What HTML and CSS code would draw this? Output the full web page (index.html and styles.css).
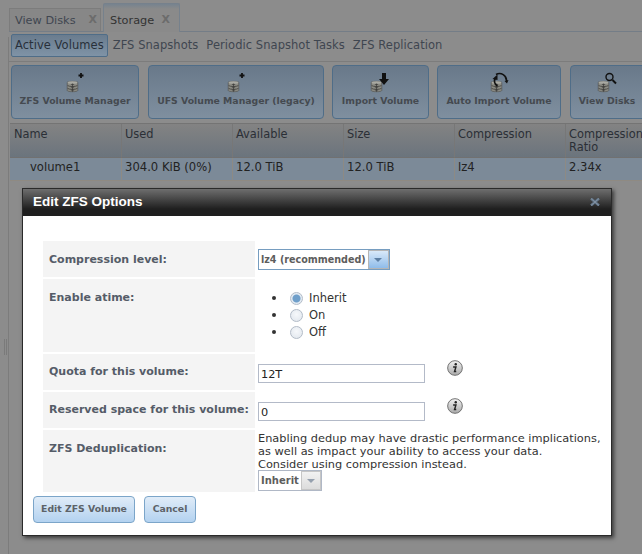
FILE: index.html
```html
<!DOCTYPE html>
<html lang="en">
<head>
<meta charset="utf-8">
<title>Storage</title>
<link rel="stylesheet" href="styles.css">
</head>
<body>
<svg class="defs" width="0" height="0" aria-hidden="true">
  <symbol id="db" viewBox="0 0 16 16">
    <path d="M1.500 3.500C1.500 2 14.500 2 14.500 3.500V13.500C14.500 15.500 1.500 15.500 1.500 13.500Z" fill="#8c8c84" stroke="#4a4a48" stroke-width=".7"/>
    <ellipse cx="8" cy="3.800" rx="6" ry="1.800" fill="#a9a9a2"/>
    <path d="M2 7.500C4 9 12 9 14 7.500M2 11C4 12.500 12 12.500 14 11" fill="none" stroke="#3c3c3a" stroke-width="1"/>
    <path d="M8 5V15M6 6H10M6 9.500H10M6 13H10" stroke="#3a3a38" stroke-width=".9"/>
  </symbol>
</svg>
<div class="page">
  <div class="rail"><span class="grip"></span></div>
  <main class="content">
    <nav class="tabs">
      <div class="tab">View Disks<span class="tab-x">X</span></div>
      <div class="tab tab-on">Storage<span class="tab-x">X</span></div>
    </nav>
    <nav class="subtabs">
      <span class="subtab subtab-on">Active Volumes</span>
      <span class="subtab">ZFS Snapshots</span>
      <span class="subtab">Periodic Snapshot Tasks</span>
      <span class="subtab">ZFS Replication</span>
    </nav>
    <div class="tools">
      <div class="tool tool-a">
        <svg class="tool-icon" viewBox="0 0 24 22"><use href="#db" x="3" y="7" width="13" height="14"/><path d="M18 1V6M15.500 3.500H20.500" stroke="#111" stroke-width="1.800"/></svg>
        <span>ZFS Volume Manager</span>
      </div>
      <div class="tool tool-b">
        <svg class="tool-icon" viewBox="0 0 24 22"><use href="#db" x="3" y="7" width="13" height="14"/><path d="M18 1V6M15.500 3.500H20.500" stroke="#111" stroke-width="1.800"/></svg>
        <span>UFS Volume Manager (legacy)</span>
      </div>
      <div class="tool tool-c">
        <svg class="tool-icon" viewBox="0 0 24 22"><use href="#db" x="1" y="7" width="13" height="14"/><path d="M13 1H17V7H20L15 13L10 7H13Z" fill="#111"/></svg>
        <span>Import Volume</span>
      </div>
      <div class="tool tool-d">
        <svg class="tool-icon" viewBox="0 0 24 22"><use href="#db" x="3" y="7" width="13" height="14"/><path d="M9 2.500A7 7 0 0 1 19.500 9" fill="none" stroke="#111" stroke-width="1.600"/><path d="M17.500 9L20 11.500L21.500 8Z" fill="#111"/><path d="M8.500 6C6.500 9 7.500 12 10.500 14" fill="none" stroke="#111" stroke-width="1.600"/><path d="M5.500 7L10.500 2.500V8Z" fill="#111"/></svg>
        <span>Auto Import Volume</span>
      </div>
      <div class="tool tool-e">
        <svg class="tool-icon" viewBox="0 0 24 22"><use href="#db" x="2" y="7" width="13" height="14"/><circle cx="14.500" cy="5" r="3.500" fill="none" stroke="#111" stroke-width="1.400"/><path d="M17.500 8L21 11.500" stroke="#111" stroke-width="2"/></svg>
        <span>View Disks</span>
      </div>
    </div>
    <div class="grid">
      <div class="cell head first">Name</div>
      <div class="cell head">Used</div>
      <div class="cell head">Available</div>
      <div class="cell head">Size</div>
      <div class="cell head">Compression</div>
      <div class="cell head">Compression Ratio</div>
      <div class="cell row indent">volume1</div>
      <div class="cell row">304.0 KiB (0%)</div>
      <div class="cell row">12.0 TiB</div>
      <div class="cell row">12.0 TiB</div>
      <div class="cell row">lz4</div>
      <div class="cell row">2.34x</div>
    </div>
  </main>
</div>

<section class="dialog">
  <header class="dialog-title">
    <h1>Edit ZFS Options</h1>
    <svg class="dialog-x" viewBox="0 0 10 8"><path d="M1 .5L9 7.500M9 .5L1 7.500" stroke="#5f7285" stroke-width="2.600"/><path d="M1 .5L9 7.500M9 .5L1 7.500" stroke="#8d9bab" stroke-width=".8"/></svg>
  </header>
  <div class="dialog-body">
    <div class="form">
      <div class="label label-mid h36">Compression level:</div>
      <div class="value h36">
        <div class="select select-on"><span class="select-text">lz4 (recommended)</span><span class="select-arrow"></span></div>
      </div>

      <div class="label label-top h73">Enable atime:</div>
      <div class="value h73">
        <ul class="radios">
          <li><span class="radio radio-on"></span>Inherit</li>
          <li><span class="radio"></span>On</li>
          <li><span class="radio"></span>Off</li>
        </ul>
      </div>

      <div class="label label-quota h36">Quota for this volume:</div>
      <div class="value h36 field-row">
        <div class="input">12T</div>
        <svg class="info" viewBox="0 0 17 17"><defs><linearGradient id="ig" x1="0" y1="0" x2="0" y2="1"><stop offset="0" stop-color="#f2f2f2"/><stop offset="1" stop-color="#a9a9a9"/></linearGradient></defs><circle cx="8.500" cy="8.500" r="7.800" fill="url(#ig)" stroke="#6a6a6a"/><circle cx="9.300" cy="4.500" r="1.300" fill="#222"/><path d="M6.500 7.500H9.500L8 12.300H9.800" fill="none" stroke="#222" stroke-width="1.500"/></svg>
      </div>

      <div class="label label-quota h36">Reserved space for this volume:</div>
      <div class="value h36 field-row">
        <div class="input">0</div>
        <svg class="info" viewBox="0 0 17 17"><circle cx="8.500" cy="8.500" r="7.800" fill="url(#ig)" stroke="#6a6a6a"/><circle cx="9.300" cy="4.500" r="1.300" fill="#222"/><path d="M6.500 7.500H9.500L8 12.300H9.800" fill="none" stroke="#222" stroke-width="1.500"/></svg>
      </div>

      <div class="label label-top h62">ZFS Deduplication:</div>
      <div class="value h62">
        <p class="warn">Enabling dedup may have drastic performance implications,<br>as well as impact your ability to access your data.<br>Consider using compression instead.</p>
        <div class="select"><span class="select-text">Inherit</span><span class="select-arrow"></span></div>
      </div>
    </div>
    <div class="actions">
      <span class="btn btn-save">Edit ZFS Volume</span>
      <span class="btn btn-cancel">Cancel</span>
    </div>
  </div>
</section>
</body>
</html>
```
FILE: styles.css
```css
* { box-sizing: border-box; }
html, body { margin: 0; height: 100%; }
body {
  position: relative;
  width: 642px;
  height: 554px;
  overflow: hidden;
  background: #8c8c8c;
  font: 11px/13px "DejaVu Sans", sans-serif;
  color: #333;
}
.defs { position: absolute; }
.page { display: flex; height: 100%; }
.rail {
  flex: 0 0 9px;
  margin-top: 37px;
  border-right: 1px solid #7c7c7c;
  position: relative;
}
.grip {
  position: absolute;
  left: 4px;
  top: 302px;
  width: 3px;
  height: 16px;
  border-left: 1px solid #7a7a7a;
  border-right: 1px solid #7a7a7a;
}
.content { flex: 1; min-width: 0; overflow: hidden; }

.tabs {
  display: flex;
  align-items: flex-end;
  gap: 2px;
  height: 32px;
  padding-top: 3px;
  border-bottom: 1px solid #747d87;
}
.tab {
  display: flex;
  justify-content: space-between;
  width: 92px;
  height: 23px;
  padding: 5px 3px 0 5px;
  background: #878787;
  border: 1px solid #7c7c7c;
  border-bottom: 0;
  font-size: 11.300px;
  color: #3f4650;
}
.tab-on {
  width: 77px;
  height: 29px;
  margin-bottom: -1px;
  padding: 10px 9px 0 6px;
  background: linear-gradient(#76838f 0, #8a8a8a 5px);
  border-color: #76818c;
  border-radius: 2px 2px 0 0;
  color: #333;
}
.tab-x { font-weight: bold; color: #6c6c6c; line-height: 12px; font-size: 11px; }

.subtabs {
  display: flex;
  gap: 2px;
  height: 30px;
  padding: 2px 0 0 2px;
  border-bottom: 1px solid #7c7c7c;
  white-space: nowrap;
}
.subtab { height: 23px; padding: 5px 3px 0; font-size: 11.500px; letter-spacing: .05px; color: #3f4650; }
.subtab-on {
  background: linear-gradient(#6a7c8e, #7f93a6);
  border: 1px solid #4f6d88;
  border-radius: 2px;
  padding: 4px 3px 0;
  color: #28303a;
}

.tools { display: flex; padding: 3px 0 0 2px; white-space: nowrap; }
.tool {
  flex: none;
  display: flex;
  flex-direction: column;
  align-items: center;
  height: 54px;
  padding-top: 6px;
  background: linear-gradient(#69798a, #7f8f9f);
  border: 1px solid #4f6d88;
  border-radius: 4px;
  font-weight: bold;
  font-size: 9.300px;
  line-height: 12px;
  color: #454a50;
}
.tool-a { width: 128px; margin-right: 9px; }
.tool-b { width: 176px; margin-right: 8px; }
.tool-c { width: 97px; margin-right: 8px; }
.tool-d { width: 124px; margin-right: 9px; }
.tool-e { width: 100px; padding-right: 26px; }
.tool-icon { width: 24px; height: 22px; margin-bottom: 1px; }

.grid {
  display: grid;
  grid-template-columns: 112px repeat(5, 111px);
  grid-template-rows: 34px 23px;
  margin: 4px 0 0 1px;
  width: 680px;
  border-top: 1px solid #747474;
}
.cell { padding: 3px 3px 0 3px; border-right: 1px solid #777; color: #2b2f36; }
.first { padding-left: 4px; }
.head {
  background: linear-gradient(#838383, #6b747d);
  border-bottom: 1px solid #717171;
  padding-top: 4px;
  font-size: 11.400px;
  line-height: 13px;
}
.row {
  background: #7c8a98;
  border-bottom: 1px solid #8f8a82;
  border-right-color: #8d8a84;
  padding-top: 3px;
  font-size: 11.600px;
  color: #222;
}
.indent { padding-left: 20px; }

.dialog {
  position: absolute;
  left: 22px;
  top: 188px;
  width: 590px;
  height: 348px;
  background: #fff;
  border: 1px solid #2a2a2a;
  box-shadow: 2px 2px 4px rgba(0, 0, 0, .6);
}
.dialog-title {
  display: flex;
  align-items: center;
  justify-content: space-between;
  height: 27px;
  padding: 0 11px 0 10px;
  background: linear-gradient(#6e6e6e, #1f1f1f 80%);
  border-bottom: 2px solid #1f1f1f;
}
.dialog-title h1 {
  margin: 0;
  font-family: "Liberation Sans", sans-serif;
  font-size: 13.500px;
  font-weight: bold;
  line-height: 16px;
  color: #fff;
}
.dialog-x { width: 10px; height: 8px; }

.dialog-body { padding: 25px 0 0 10px; }
.form {
  display: grid;
  grid-template-columns: 212px 1fr;
  column-gap: 3px;
  row-gap: 2px;
  margin-left: 10px;
}
.label { background: #f4f4f4; padding-left: 6px; font-weight: bold; color: #555c68; font-size: 11px; }
.h36 { height: 36px; }
.h73 { height: 73px; }
.h62 { height: 62px; }
.label-mid { display: flex; align-items: center; }
.label-top { padding-top: 12px; }
.label-quota { padding-top: 11px; }
.value { color: #333; }

.select {
  display: inline-flex;
  height: 21px;
  border: 1px solid #b0b8c6;
  background: #fff;
  vertical-align: top;
}
.select-text {
  padding: 3px 2px 0 2px;
  font-weight: bold;
  font-size: 10px;
  color: #5d5d5d;
}
.select-arrow {
  position: relative;
  width: 20px;
  border: 1px solid #c6c6c6;
  background: linear-gradient(#f2f2f2, #dcdcdc);
}
.select-arrow::after {
  content: "";
  position: absolute;
  left: 5px;
  top: 7px;
  border: 4px solid transparent;
  border-top: 4px solid #95a0ae;
  border-bottom: 0;
}
.select-on { margin-top: 8px; border-color: #769dc0; }
.select-on .select-text { width: 109px; font-size: 9.600px; }
.select-on .select-arrow {
  width: 21px;
  background: linear-gradient(#d9e9f9, #8fbcea);
  border-color: #b5b5b5;
}
.select-on .select-arrow::after { border-top-color: #5d7fa3; }

.radios { margin: 0; padding: 11px 0 0 29px; list-style: disc; font-size: 11.500px; }
.radios li { height: 17px; line-height: 15px; color: #333; }
.radios li::marker { font-size: 14px; }
.radio {
  display: inline-block;
  width: 13px;
  height: 13px;
  margin: 0 6px -3px 3px;
  border: 1px solid #b3bcc8;
  border-radius: 50%;
  background: radial-gradient(circle at 50% 40%, #f6f8fb, #dfe5ec);
}
.radio-on { background: radial-gradient(circle, #6f9fca 0 3.500px, #e3ebf3 4.500px); }

.field-row { display: flex; align-items: flex-start; }
.input {
  width: 167px;
  height: 19px;
  margin-top: 10px;
  padding: 3px 2px;
  border: 1px solid #b3bac8;
  color: #222;
  font-size: 11.300px;
}
.info { flex: none; width: 16px; height: 16px; margin: 6px 0 0 22px; }

.warn { margin: 0 0 -1px; padding-top: 2px; font-size: 11.350px; color: #333; }

.actions { display: flex; gap: 9px; margin-top: 4px; }
.btn {
  display: flex;
  align-items: center;
  justify-content: center;
  height: 27px;
  padding-bottom: 2px;
  background: linear-gradient(#e0ecf8, #b3d2f0);
  border: 1px solid #7ba5c9;
  border-radius: 4px;
  font-weight: bold;
  font-size: 9.300px;
  color: #5c6268;
}
.btn-save { width: 102px; }
.btn-cancel { width: 52px; }
```
